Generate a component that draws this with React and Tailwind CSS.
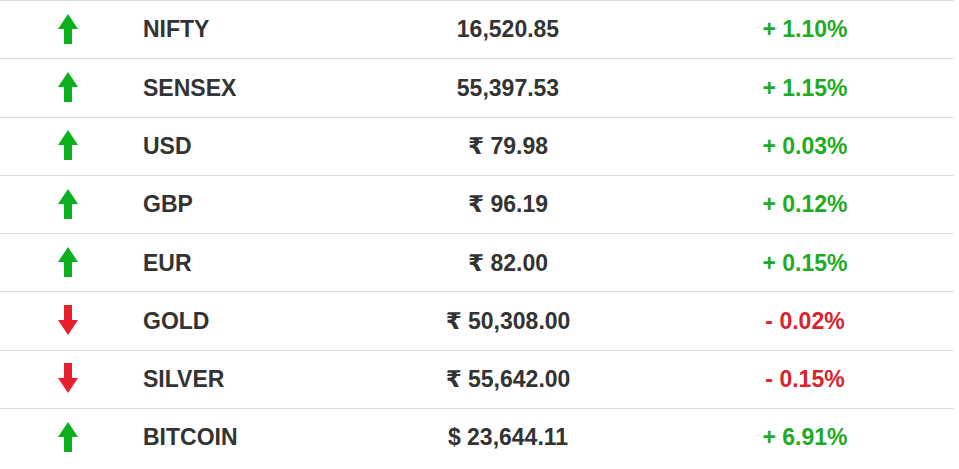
import React from 'react';

const rows = [
  { name: 'NIFTY', price: '16,520.85', change: '+ 1.10%', up: true },
  { name: 'SENSEX', price: '55,397.53', change: '+ 1.15%', up: true },
  { name: 'USD', price: '₹ 79.98', change: '+ 0.03%', up: true },
  { name: 'GBP', price: '₹ 96.19', change: '+ 0.12%', up: true },
  { name: 'EUR', price: '₹ 82.00', change: '+ 0.15%', up: true },
  { name: 'GOLD', price: '₹ 50,308.00', change: '- 0.02%', up: false },
  { name: 'SILVER', price: '₹ 55,642.00', change: '- 0.15%', up: false },
  { name: 'BITCOIN', price: '$ 23,644.11', change: '+ 6.91%', up: true },
];

function Arrow({ up }) {
  // simple block arrow, flipped for the down case
  return (
    <svg width="20" height="30" viewBox="0 0 20 30" className={up ? '' : 'rotate-180'}>
      <polygon
        points="10,0 20,15 14,15 14,30 6,30 6,15 0,15"
        fill={up ? '#0bb01f' : '#e8202e'}
      />
    </svg>
  );
}

export default function App() {
  return (
    <div className="bg-white w-[959px] h-[469px] overflow-hidden" style={{ fontFamily: '"Liberation Sans", "DejaVu Sans", Arial, sans-serif' }}>
      <div className="w-[954px]">
        {rows.map((row) => (
          <div
            key={row.name}
            className="grid grid-cols-[136px_224px_296px_298px] items-center h-[58.3px] border-t border-[#dddddd] text-[23px] font-bold"
          >
            <div className="flex justify-center pb-[2px]">
              <Arrow up={row.up} />
            </div>
            <div className="pl-[7px] text-[#333333]">{row.name}</div>
            <div className="text-center text-[#333333]">{row.price}</div>
            <div className={`text-center ${row.up ? 'text-[#1eab24]' : 'text-[#d9232d]'}`}>{row.change}</div>
          </div>
        ))}
      </div>
    </div>
  );
}
